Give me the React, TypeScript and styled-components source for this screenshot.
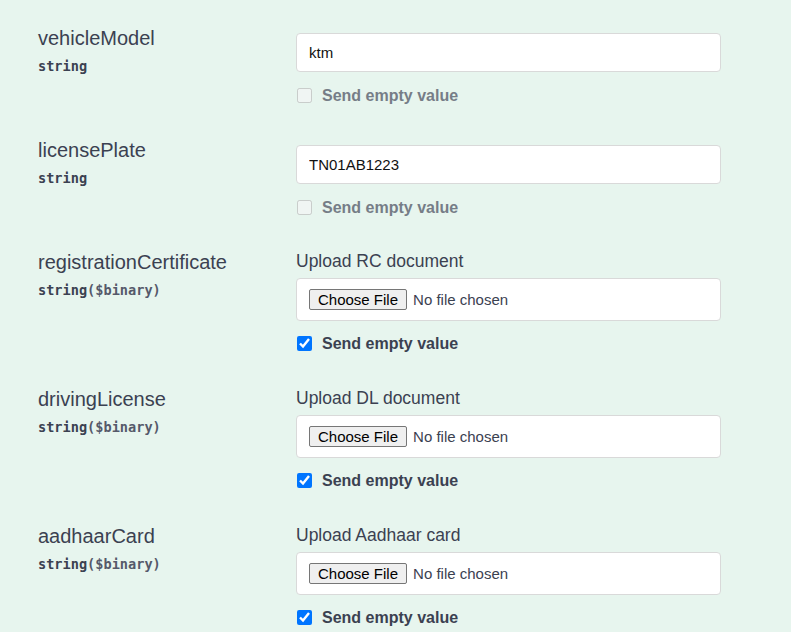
import React from 'react';
import styled, {createGlobalStyle} from 'styled-components';

const GlobalStyle = createGlobalStyle`
    html, body {
        margin: 0;
        padding: 0;
        background: #e7f5ee;
    }
    body {
        font-family: "Liberation Sans", Arial, sans-serif;
        color: #3b4151;
    }
`;

const Page = styled.div`
    min-height: 632px;
    padding: 27px 0 0 38px;
    box-sizing: border-box;
    background: #e7f5ee;
`;

const Row = styled.div<{$file?: boolean}>`
    display: grid;
    grid-template-columns: 258px 425px;
    padding-bottom: ${({$file}) => ($file ? '35px' : '34px')};
`;

const NameCell = styled.div`
    display: flex;
    flex-direction: column;
`;

const ParamName = styled.div`
    font-size: 20px;
    line-height: 23px;
    color: #3b4151;
`;

const ParamType = styled.div`
    padding-top: 8px;
    font-family: "DejaVu Sans Mono", "Liberation Mono", monospace;
    font-size: 13.6px;
    font-weight: bold;
    line-height: 16px;
    color: #3b4151;
`;

const Format = styled.span`
    color: #55596a;
`;

const DescCell = styled.div`
    display: flex;
    flex-direction: column;
`;

const Caption = styled.div`
    font-size: 17.5px;
    line-height: 20px;
    color: #3b4151;
    margin-bottom: 7px;
`;

const TextInput = styled.input`
    box-sizing: border-box;
    width: 425px;
    height: 39px;
    margin-top: 6px;
    padding: 0 12px;
    border: 1px solid #d9d9d9;
    border-radius: 4px;
    background: #fff;
    font-family: "Liberation Sans", Arial, sans-serif;
    font-size: 15px;
    color: #111;
    outline: none;
`;

const FileInput = styled.input`
    box-sizing: border-box;
    display: block;
    width: 425px;
    height: 43px;
    padding: 10px 12px;
    border: 1px solid #d9d9d9;
    border-radius: 4px;
    background: #fff;
    font-family: "Liberation Sans", Arial, sans-serif;
    font-size: 15px;
    color: #3b4151;

    &::file-selector-button {
        height: 21px;
        margin: 0 6px 0 0;
        padding: 0 8px;
        font-family: "Liberation Sans", Arial, sans-serif;
        font-size: 15px;
        color: #000;
        background: #efefef;
        border: 1px solid #767676;
        border-radius: 2px;
    }
`;

const EmptyToggle = styled.label<{$disabled?: boolean}>`
    display: flex;
    align-items: center;
    margin-top: ${({$disabled}) => ($disabled ? '14px' : '13px')};
    height: 19px;
    font-size: 16px;
    font-weight: bold;
    color: ${({$disabled}) => ($disabled ? '#767d87' : '#3b4151')};
`;

const Check = styled.input`
    width: 15px;
    height: 15px;
    margin: 0 10px 0 1px;
    accent-color: #0075ff;
`;

interface IParam {
    name: string;
    format?: string;
    value?: string;
    caption?: string;
}

const params: IParam[] = [
    {name: 'vehicleModel', value: 'ktm'},
    {name: 'licensePlate', value: 'TN01AB1223'},
    {name: 'registrationCertificate', format: '($binary)', caption: 'Upload RC document'},
    {name: 'drivingLicense', format: '($binary)', caption: 'Upload DL document'},
    {name: 'aadhaarCard', format: '($binary)', caption: 'Upload Aadhaar card'},
];

function ParamRow({name, format, value, caption}: IParam) {
    const isFile = !!format;
    return (
        <Row $file={isFile}>
            <NameCell>
                <ParamName>{name}</ParamName>
                <ParamType>
                    string{format && <Format>{format}</Format>}
                </ParamType>
            </NameCell>
            <DescCell>
                {isFile ? (
                    <>
                        <Caption>{caption}</Caption>
                        <FileInput type="file" />
                    </>
                ) : (
                    <TextInput type="text" defaultValue={value} />
                )}
                <EmptyToggle $disabled={!isFile}>
                    <Check type="checkbox" disabled={!isFile} defaultChecked={isFile} />
                    Send empty value
                </EmptyToggle>
            </DescCell>
        </Row>
    );
}

export default function App() {
    return (
        <Page>
            <GlobalStyle />
            {params.map((p) => (
                <ParamRow key={p.name} {...p} />
            ))}
        </Page>
    );
}
